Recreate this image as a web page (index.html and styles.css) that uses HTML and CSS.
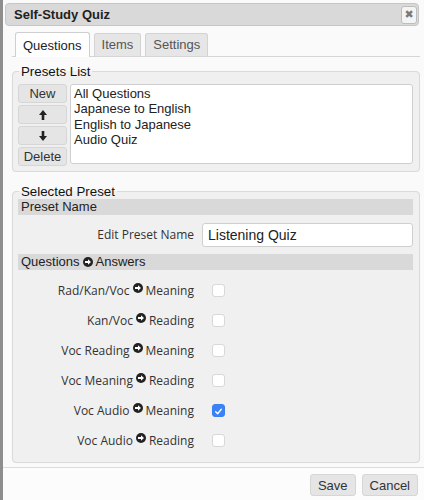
FILE: index.html
```html
<!DOCTYPE html>
<html>
<head>
<meta charset="utf-8">
<link rel="stylesheet" href="styles.css">
</head>
<body>
<div class="dialog">
  <div class="titlebar">
    <span class="title">Self-Study Quiz</span>
    <span class="close">&#10006;</span>
  </div>
  <div class="content">
    <div class="tabs">
      <span class="tab active">Questions</span>
      <span class="tab">Items</span>
      <span class="tab">Settings</span>
    </div>
    <fieldset class="box presets">
      <legend>Presets List</legend>
      <div class="plist">
        <div class="pbtns">
          <span class="btn">New</span>
          <span class="btn"><svg width="8" height="10" viewBox="0 0 8 10"><path d="M4 0 L8 5 H5.3 V10 H2.7 V5 H0 Z" fill="#222"/></svg></span>
          <span class="btn"><svg width="8" height="10" viewBox="0 0 8 10"><path d="M4 10 L8 5 H5.3 V0 H2.7 V5 H0 Z" fill="#222"/></svg></span>
          <span class="btn">Delete</span>
        </div>
        <div class="listbox">
          <div>All Questions</div>
          <div>Japanese to English</div>
          <div>English to Japanese</div>
          <div>Audio Quiz</div>
        </div>
      </div>
    </fieldset>
    <fieldset class="box selected">
      <legend>Selected Preset</legend>
      <div class="section">Preset Name</div>
      <div class="row name">
        <span class="lbl">Edit Preset Name</span>
        <span class="input">Listening Quiz</span>
      </div>
      <div class="section">Questions <svg class="arr" width="10" height="10" viewBox="0 0 10 10"><circle cx="5" cy="5" r="5" fill="#222"/><path d="M2 4.1 H5 V2.2 L8 5 L5 7.8 V5.9 H2 Z" fill="#fff"/></svg> Answers</div>
      <div class="rows">
      <div class="row"><span class="lbl">Rad/Kan/Voc <svg class="arr" width="10" height="10" viewBox="0 0 10 10"><circle cx="5" cy="5" r="5" fill="#222"/><path d="M2 4.1 H5 V2.2 L8 5 L5 7.8 V5.9 H2 Z" fill="#fff"/></svg> Meaning</span><span class="cb"></span></div>
      <div class="row"><span class="lbl">Kan/Voc <svg class="arr" width="10" height="10" viewBox="0 0 10 10"><circle cx="5" cy="5" r="5" fill="#222"/><path d="M2 4.1 H5 V2.2 L8 5 L5 7.8 V5.9 H2 Z" fill="#fff"/></svg> Reading</span><span class="cb"></span></div>
      <div class="row"><span class="lbl">Voc Reading <svg class="arr" width="10" height="10" viewBox="0 0 10 10"><circle cx="5" cy="5" r="5" fill="#222"/><path d="M2 4.1 H5 V2.2 L8 5 L5 7.8 V5.9 H2 Z" fill="#fff"/></svg> Meaning</span><span class="cb"></span></div>
      <div class="row"><span class="lbl">Voc Meaning <svg class="arr" width="10" height="10" viewBox="0 0 10 10"><circle cx="5" cy="5" r="5" fill="#222"/><path d="M2 4.1 H5 V2.2 L8 5 L5 7.8 V5.9 H2 Z" fill="#fff"/></svg> Reading</span><span class="cb"></span></div>
      <div class="row"><span class="lbl">Voc Audio <svg class="arr" width="10" height="10" viewBox="0 0 10 10"><circle cx="5" cy="5" r="5" fill="#222"/><path d="M2 4.1 H5 V2.2 L8 5 L5 7.8 V5.9 H2 Z" fill="#fff"/></svg> Meaning</span><span class="cb on"><svg width="13" height="13" viewBox="0 0 13 13"><path d="M3.2 6.8 L5.5 9.2 L9.8 3.8" stroke="#fff" stroke-width="1.6" fill="none" stroke-linecap="round" stroke-linejoin="round"/></svg></span></div>
      <div class="row"><span class="lbl">Voc Audio <svg class="arr" width="10" height="10" viewBox="0 0 10 10"><circle cx="5" cy="5" r="5" fill="#222"/><path d="M2 4.1 H5 V2.2 L8 5 L5 7.8 V5.9 H2 Z" fill="#fff"/></svg> Reading</span><span class="cb"></span></div>
      </div>
    </fieldset>
  </div>
  <div class="buttonpane">
    <span class="btn big">Save</span>
    <span class="btn big">Cancel</span>
  </div>
</div>
</body>
</html>
```
FILE: styles.css
```css
html, body {
  margin: 0;
  padding: 0;
  background: #fff;
}
body {
  font-family: "Liberation Sans", Arial, sans-serif;
  color: #222;
  height: 500px;
  overflow: hidden;
}
.dialog {
  border-left: 3px solid #8e8e8e;
  height: 500px;
  box-sizing: border-box;
  background: #fafafa;
  display: flex;
  flex-direction: column;
}
.titlebar {
  margin: 3px 5px 0 2px;
  height: 21px;
  background: #d9d9d9;
  border: 1px solid #c6c6c6;
  border-radius: 4px;
  display: flex;
  align-items: center;
  justify-content: space-between;
  padding: 0 1px 0 8px;
}
.title {
  font-weight: bold;
  font-size: 13px;
  color: #222;
}
.close {
  width: 16px;
  height: 18px;
  box-sizing: border-box;
  border: 1px solid #bdbdbd;
  border-radius: 3px;
  background: #f4f4f4;
  color: #7a7a7a;
  font-size: 11px;
  font-family: "DejaVu Sans", sans-serif;
  display: flex;
  align-items: center;
  justify-content: center;
}
.content {
  padding: 7px 4px 0 9px;
  flex: 1;
}
.tabs {
  display: flex;
  gap: 4px;
  padding-left: 3px;
  border-bottom: 1px solid #d5d5d5;
  height: 23px;
  align-items: flex-end;
}
.tab {
  font-size: 13px;
  color: #555;
  background: #e6e6e6;
  border: 1px solid #d3d3d3;
  border-bottom: none;
  border-radius: 3px 3px 0 0;
  padding: 0 7px;
  height: 22px;
  line-height: 21px;
}
.tab.active {
  background: #fff;
  color: #222;
  height: 24px;
  line-height: 25px;
  margin-bottom: -1px;
  border-color: #cfcfcf;
}
.box {
  border: 1px solid #dadada;
  border-radius: 4px;
  background: #f0f0f0;
  margin: 0;
  padding: 0 6px 5px 5px;
}
.box legend {
  font-size: 13.3px;
  color: #111;
  padding: 0 2px;
  margin-left: 1px;
}
.presets {
  margin-top: 7px;
  padding-top: 5px;
}
.plist {
  display: flex;
  gap: 3px;
}
.pbtns {
  display: flex;
  flex-direction: column;
  gap: 2px;
  width: 49px;
}
.btn {
  display: flex;
  align-items: center;
  justify-content: center;
  height: 19px;
  box-sizing: border-box;
  border: 1px solid #d6d6d6;
  border-radius: 3px;
  background: #e5e5e5;
  font-size: 13px;
  color: #333;
}
.listbox {
  flex: 1;
  background: #fff;
  border: 1px solid #cfcfcf;
  border-radius: 3px;
  font-size: 13px;
  line-height: 15.3px;
  padding: 1px 3px;
  color: #222;
  height: 80px;
  box-sizing: border-box;
}
.selected {
  margin-top: 12px;
  padding-bottom: 7px;
}
.section {
  background: #d9d9d9;
  font-size: 13px;
  color: #222;
  height: 16px;
  line-height: 16px;
  padding-left: 3px;
  display: flex;
  align-items: center;
  gap: 3px;
}
.arr {
  display: inline-block;
}
.rows {
  padding-top: 5px;
}
.row {
  display: grid;
  grid-template-columns: 176px 1fr;
  column-gap: 8px;
  align-items: center;
  height: 30px;
  font-family: "Open Sans", sans-serif;
  font-size: 12px;
  color: #333;
}
.row.name {
  height: 39px;
}
.lbl {
  text-align: right;
  display: flex;
  justify-content: flex-end;
  align-items: center;
  gap: 3px;
}
.lbl .arr {
  margin-top: -5px;
}
.input {
  font-family: "Liberation Sans", Arial, sans-serif;
  font-size: 14px;
  color: #222;
  background: #fff;
  border: 1px solid #cfcfcf;
  border-radius: 3px;
  height: 24px;
  line-height: 22px;
  box-sizing: border-box;
  padding-left: 5px;
}
.cb {
  width: 13px;
  height: 13px;
  box-sizing: border-box;
  border: 1px solid #d8d8d8;
  border-radius: 3px;
  background: #fff;
  margin-left: 10px;
  display: flex;
}
.cb.on {
  background: #3b82f6;
  border-color: #3b7ff0;
}
.buttonpane {
  border-top: 1px solid #dcdcdc;
  background: #fcfcfc;
  height: 33px;
  box-sizing: border-box;
  padding-top: 2px;
  display: flex;
  justify-content: flex-end;
  align-items: center;
  gap: 6px;
  padding-right: 6px;
}
.btn.big {
  height: 22px;
  padding: 0 7px;
  font-size: 13px;
  color: #333;
}
```
